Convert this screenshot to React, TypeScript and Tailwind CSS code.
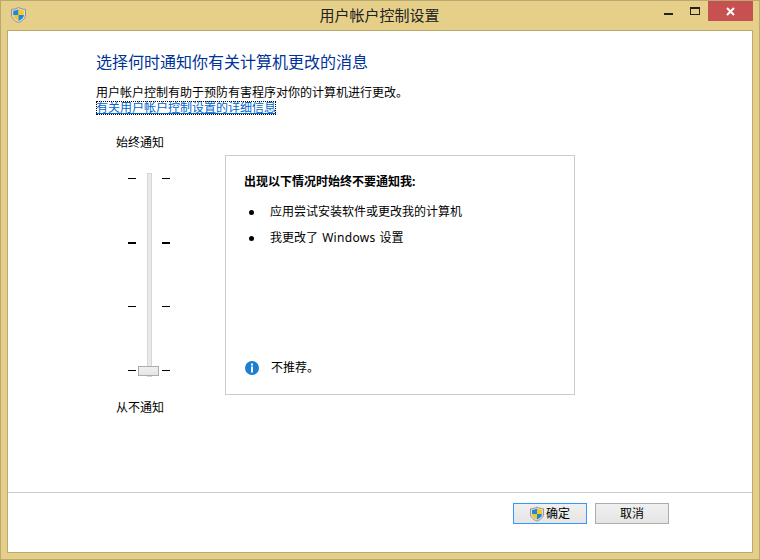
import React from 'react';

const cjk = { fontFamily: '"Noto Sans", "Noto Sans CJK SC", sans-serif' };

function Shield({ w = 15, h = 16 }: { w?: number; h?: number }) {
    return (
        <svg width={w} height={h} viewBox="0 0 15 16" className="shrink-0">
            <path d="M7.5 .5 C9.5 1.6 11.6 2.2 14.5 2.4 V8 C14.5 11.6 11.2 14.2 7.5 15.6 C3.8 14.2 .5 11.6 .5 8 V2.4 C3.4 2.2 5.5 1.6 7.5 .5 Z" fill="#dcdcdc" stroke="#8f8f8f" strokeWidth="1" />
            <path d="M7.5 2.2 C6 3 4.2 3.5 2.2 3.7 V8 H7.5 Z" fill="#1f86d8" />
            <path d="M7.5 2.2 C9 3 10.8 3.5 12.8 3.7 V8 H7.5 Z" fill="#f7c81e" />
            <path d="M2.2 8 H7.5 V13.8 C5 12.8 2.2 11 2.2 8 Z" fill="#f7c81e" />
            <path d="M12.8 8 H7.5 V13.8 C10 12.8 12.8 11 12.8 8 Z" fill="#1f86d8" />
        </svg>
    );
}

function Tick({ thick }: { thick?: boolean }) {
    const cls = thick ? 'w-2 h-[2px] bg-black' : 'w-2 h-px bg-black';
    return (
        <div className="flex justify-between items-start h-[2px]">
            <div className={cls}></div>
            <div className={cls}></div>
        </div>
    );
}

function Slider() {
    return (
        <div className="relative w-[42px] ml-[32px] mt-[27px]">
            <div className="absolute left-[19px] top-[-5px] w-[5px] h-[204px] bg-[#e7eaea] border border-[#d6d6d6]"></div>
            <div className="flex flex-col gap-[62px]">
                <Tick />
                <Tick thick />
                <Tick />
                <Tick />
            </div>
            <div className="absolute left-[10px] bottom-[-4px] w-[21px] h-[10px] bg-gradient-to-b from-[#f0f0f0] to-[#e5e5e5] border border-[#acacac]"></div>
        </div>
    );
}

export default function App() {
    return (
        <div className="w-[760px] h-[560px] flex flex-col bg-[#e6d089] border border-[#b9a86f] text-black text-xs" style={cjk}>
            <div className="relative h-[29px] shrink-0 flex items-center justify-center">
                <div className="absolute left-[10px] top-[6px]">
                    <Shield />
                </div>
                <span className="text-[15px] text-[#222] leading-none -mt-[1px] ml-[-1px]">用户帐户控制设置</span>
                <div className="absolute left-[663px] top-[12px] w-[9px] h-[2px] bg-[#222]"></div>
                <div className="absolute left-[689px] top-[6px] w-[10px] h-[8px] border border-t-2 border-[#222]"></div>
                <div className="absolute left-[707px] top-0 w-[45px] h-[20px] bg-[#c75050] flex items-center justify-center">
                    <svg width="9" height="9" viewBox="0 0 9 9">
                        <path d="M1 1 L8 8 M8 1 L1 8" stroke="#fff" strokeWidth="2" />
                    </svg>
                </div>
            </div>

            <div className="flex-1 mx-[6px] mb-[6px] bg-white border border-[#bca96f] flex flex-col">
                <div className="h-[461px] shrink-0 pl-[88px]">
                    <h1 className="text-base font-normal text-[#003399] leading-[20px] mt-[21px]">选择何时通知你有关计算机更改的消息</h1>
                    <p className="text-xs leading-[15px] mt-[13px]">用户帐户控制有助于预防有害程序对你的计算机进行更改。</p>
                    <a className="block w-fit mt-px text-xs leading-[14px] text-[#0066cc] underline outline-1 outline-dotted outline-black -outline-offset-1" href="#">
                        有关用户帐户控制设置的详细信息
                    </a>
                    <div className="flex mt-[20px]">
                        <div className="w-[129px] shrink-0 flex flex-col">
                            <div className="pl-[20px] leading-[16px]">始终通知</div>
                            <Slider />
                            <div className="pl-[20px] leading-[16px] mt-[28px]">从不通知</div>
                        </div>
                        <div className="mt-[20px] w-[350px] h-[240px] border border-[#cccccc] flex flex-col pl-[18px]">
                            <div className="font-bold mt-[18px] leading-[16px]">出现以下情况时始终不要通知我:</div>
                            <ul className="mt-[14px] flex flex-col gap-[10px]">
                                <li className="flex items-center h-[16px]">
                                    <span className="w-[5px] h-[5px] rounded-full bg-black ml-[5px] mr-[16px]"></span>
                                    应用尝试安装软件或更改我的计算机
                                </li>
                                <li className="flex items-center h-[16px]">
                                    <span className="w-[5px] h-[5px] rounded-full bg-black ml-[5px] mr-[16px]"></span>
                                    <span className="[word-spacing:1px]">
                                        我更改了 <span className="tracking-[0.3px]">Windows</span> 设置
                                    </span>
                                </li>
                            </ul>
                            <div className="mt-auto mb-[18px] flex items-center gap-[12px]">
                                <svg width="14" height="14" viewBox="0 0 14 14" className="shrink-0 ml-px">
                                    <circle cx="7" cy="7" r="7" fill="#1c7fd0" />
                                    <rect x="6" y="2.5" width="2" height="2" fill="#fff" />
                                    <rect x="6" y="5.5" width="2" height="6" fill="#fff" />
                                </svg>
                                <span className="leading-[16px]">不推荐。</span>
                            </div>
                        </div>
                    </div>
                </div>
                <div className="flex-1 border-t border-[#cccccc] flex justify-end gap-2 pt-[10px] pr-[83px]">
                    <button className="w-[74px] h-[21px] flex items-center justify-center bg-gradient-to-b from-[#f0f0f0] to-[#e5e5e5] border border-[#3399ff] text-xs">
                        <Shield w={14} h={16} />
                        <span className="ml-[2px]">确定</span>
                    </button>
                    <button className="w-[74px] h-[21px] flex items-center justify-center bg-gradient-to-b from-[#f0f0f0] to-[#e5e5e5] border border-[#acacac] text-xs">
                        取消
                    </button>
                </div>
            </div>
        </div>
    );
}
